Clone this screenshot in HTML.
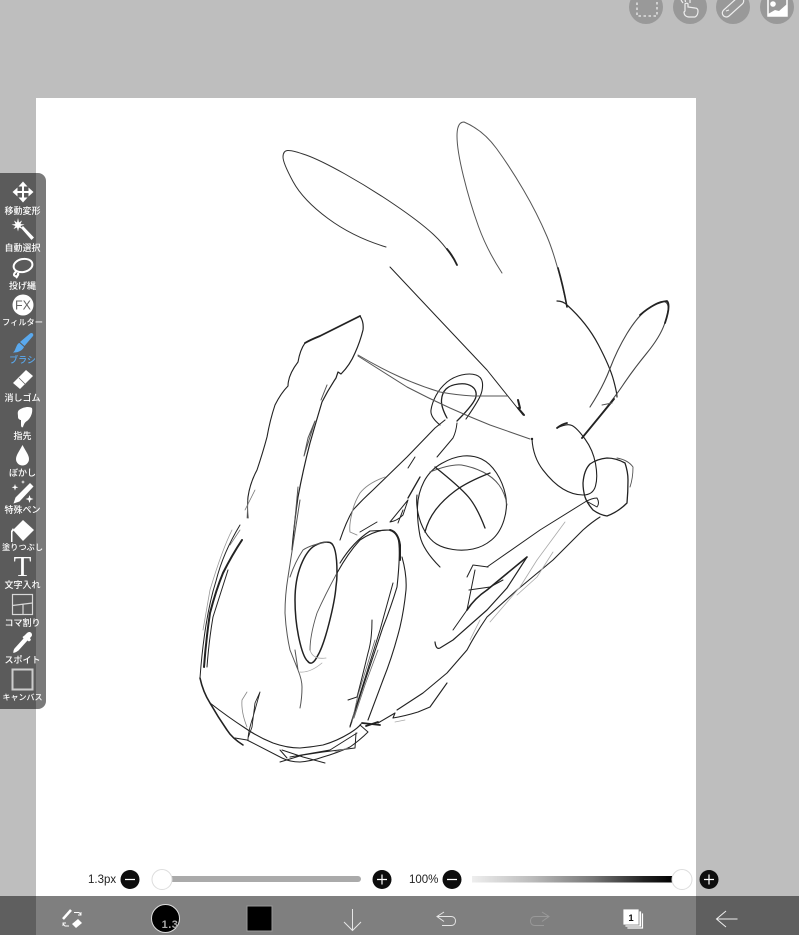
<!DOCTYPE html>
<html><head><meta charset="utf-8">
<style>
html,body{margin:0;padding:0;width:799px;height:935px;overflow:hidden;background:#bebebe}
#canvas{position:absolute;left:36px;top:98px;width:660px;height:837px;background:#fff}
svg{position:absolute;left:0;top:0}
.panel{position:absolute;left:0;top:173px;width:46px;height:536px;background:rgba(0,0,0,.52);border-radius:0 8px 8px 0}
.bar{position:absolute;left:0;top:896px;width:799px;height:39px;background:rgba(0,0,0,.5)}
.lb{position:absolute;left:-6px;width:57px;text-align:center;color:#fff;font:500 9px/10px "Liberation Sans","Noto Sans CJK JP",sans-serif;white-space:nowrap}
.t{position:absolute;font:11.5px/14px "Liberation Sans",sans-serif;color:#222}
</style></head><body>
<div id="canvas"></div>
<svg width="799" height="935" viewBox="0 0 799 935" fill="none" stroke="#222" stroke-linecap="round" stroke-linejoin="round">
<!-- ears -->
<path stroke="#333" stroke-width="1" d="M386 247Q353 237 328 218.500Q303 200 293 181.500Q283 163 283 157Q283 151 287.500 150.500Q292 150 306 155Q320 160 345 174Q370 188 395 205Q420 222 433.500 234.500Q447 247 457 265"/>
<path stroke-width="1.800" d="M447 249Q453 256 457 265"/>
<path stroke="#555" stroke-width="1" d="M502 273Q487 250 478.500 226.500Q470 203 463.500 176.500Q457 150 457 136Q457 122 464 122Q483 130 496.500 148.500Q510 167 523.500 190Q537 213 547 236.500Q557 260 567 307"/>
<path stroke-width="1.600" d="M558 268Q563 285 567 307"/>
<path stroke-width="1.200" d="M557 301Q563 301 567 305Q587 323 598.500 345Q610 367 613.500 380Q617 393 617 397"/>
<path stroke="#444" stroke-width="1.100" d="M590 407Q603 387 610 368.500Q617 350 627 333.500Q637 317 647 309.500Q657 302 662 301.500Q667 301 668 306Q669 311 664.500 324Q660 337 646.500 353.500Q633 370 623 385Q613 400 582 438"/>
<path stroke-width="1.800" d="M640 315Q655 302 667 301Q671 305 665 323M614 399L582 438"/>
<path stroke="#555" stroke-width="1" d="M602 405L612 403"/>
<path stroke-width="1" d="M390 267L437 317L487 370L523 415"/>
<path stroke-width="2" d="M518 408L524 415M518 400L520 408"/>
<!-- arm -->
<path stroke-width="1.100" d="M248 518Q247 505 248 497Q250 483 257 470Q263 452 267 437Q270 420 275 405Q281 393 288 386Q288 375 298 362Q300 350 305 343"/>
<path stroke-width="1.800" d="M305 343Q310 340 320 336L360 316"/>
<path stroke-width="1.200" d="M360 316Q364 322 363 330Q360 342 355 353Q350 365 341 374L338 372L336 378Q328 390 322 402Q316 422 310 443Q303 470 298 497Q294 525 292 550"/>
<path stroke="#555" stroke-width="1" d="M315 421L304 456L308 438L315 421M327 385L321 400M298 487L294 530"/>
<path stroke="#777" stroke-width=".8" d="M255 490L245 510M240 530L230 545"/>
<!-- left contour -->
<path stroke-width="1" d="M240 525Q223 553 216 581Q210 600 206 625Q202 650 200 678"/>
<path stroke-width="2" d="M242 540Q232 555 223 573Q216 590 210 613Q206 640 204 667"/>
<path stroke-width="1" d="M228 570Q220 595 213 617Q209 640 207 667"/>
<path stroke="#999" stroke-width=".8" d="M232 530Q222 550 210 590L203 630"/>
<path stroke-width="1.600" d="M200 678Q203 692 210 703Q218 717 227 730Q232 738 243 745"/>
<path stroke-width="1.100" d="M210 703Q228 717 245 728Q258 737 273 743Q287 748 300 748Q312 747 323 745Q337 741 350 733Q358 728 361 724"/>
<path stroke-width="1" d="M235 738L247 740L282 758Q290 762 300 762Q312 761 323 757Q337 753 350 747Q360 740 368 732L360 725"/>
<path stroke-width="1" d="M280 750L287 758M280 762L303 755L323 752L355 748L356 733M282 750L303 757L325 763M290 757L330 750L357 733"/>
<path stroke="#888" stroke-width=".8" d="M335 752L348 748"/>
<path stroke-width=".9" d="M248 740Q248 732 253 717L260 692L255 703L252 727L248 738"/>
<path stroke="#888" stroke-width=".8" d="M247 727Q241 712 242 700L247 692"/>
<!-- oval -->
<path stroke-width="1.500" d="M337 573Q337 545 330 542.500Q323 541 315 545.500Q307 550 301 565Q295 580 295 600Q295 620 299 638.500Q303 657 307.500 661Q312 667 317.500 656Q323 647 329 623.500Q335 600 336 586.500Q337 580 337 573"/>
<path stroke="#555" stroke-width="1" d="M300 500L288 577Q285 595 285 613Q286 632 290 650L298 670Q302 680 302 687Q302 698 300 708M327 542Q310 545 303 550Q295 562 290 577M295 650L298 670"/>
<path stroke="#aaa" stroke-width=".8" d="M310 650Q313 660 326 658M300 672Q310 673 322 663"/>
<path stroke="#555" stroke-width=".9" d="M310 650Q310 635 317 613Q325 595 337 573"/>
<path stroke="#777" stroke-width=".8" d="M248 500L247 518"/>
<!-- heart lobe -->
<path stroke-width="1.100" d="M337 573Q348 553 360 540Q375 530 387 530Q396 530 398 538Q401 550 397 587Q391 607 383 627Q373 657 363 687L350 727"/>
<path stroke-width="1.100" d="M340 563Q353 542 370 531L390 530M402 557Q407 575 406 590Q404 610 400 627Q393 655 383 680L368 720"/>
<path stroke-width="2" d="M390 530Q398 532 400 545L400 560"/>
<path stroke-width="1" d="M377 522L360 532M393 583L380 630L366 675L350 726M372 620Q372 640 368 653Q362 678 357 697L348 700"/>
<path stroke="#666" stroke-width=".8" d="M375 640L358 695L352 722M378 650L365 685L354 718"/>
<path stroke-width="1.800" d="M362 723L380 725M366 726L378 722"/>
<!-- wrist lower -->
<path stroke-width="1.100" d="M378 723L395 713L393 718Q405 716 418 712L430 707L447 683"/>
<path stroke-width="1.100" d="M397 710L423 693L447 673L467 650Q476 633 487 617L517 590L553 560Q570 543 583 530Q592 522 600 517"/>
<path stroke="#aaa" stroke-width=".8" d="M395 722L405 720M490 622L520 587L537 560L565 522M517 595L537 577L553 552M470 640L480 620"/>
<path stroke-width="1.200" d="M435 642Q436 650 440 648L453 640L487 610L507 588L527 557"/>
<path stroke-width="1.600" d="M467 610Q475 598 487 590Q505 575 527 557"/>
<path stroke-width="1" d="M469 590L490 587L503 580M475 570L467 610L453 630M473 565L467 577M473 565L488 567"/>
<path stroke-width="1" d="M487 567L540 530L585 502Q592 498 597 498Q600 503 597 507L588 502"/>
<!-- fingers -->
<path stroke-width="1.100" d="M532 439Q533 457 543 470Q553 483 563 489Q573 495 583 495Q593 495 595.500 486Q598 477 595.500 463.500Q593 450 585 439Q577 428 572 425.500Q567 423 557 428"/>
<path stroke-width="1.800" d="M557 428Q562 424 567 423"/>
<circle cx="532" cy="439" r="1.200" fill="#222" stroke="none"/>
<path stroke-width="1.300" d="M583 483Q584 470 590 464Q597 459 607 458Q616 458 625 463Q628 472 628 480Q628 492 627 503Q618 512 607 516Q600 515 593 510Q587 503 585 497Q583 490 583 483"/>
<path stroke="#555" stroke-width=".9" d="M617 458Q628 460 633 467Q633 478 630 487"/>
<!-- knuckle -->
<path stroke-width="1.100" d="M440 425Q430 417 431 410Q432 403 436 395.500Q440 388 446.500 382.500Q453 377 461.500 375Q470 373 476 375Q482 377 482.500 383.500Q483 390 480 396.500Q477 403 466 419"/>
<path stroke-width="1.300" d="M447 418Q441 407 441.500 400Q442 393 446 389Q450 385 458.500 384Q467 383 472 386.500Q477 390 476 396.500Q475 403 457 421"/>
<path stroke="#555" stroke-width="1" d="M358 355Q380 368 400 377Q420 386 440 392Q456 395 473 396L507 396"/>
<path stroke="#555" stroke-width="1" d="M358 356Q385 373 407 387Q428 398 450 408Q470 417 490 425L530 439"/>
<!-- forearm -->
<path stroke-width="1.100" d="M445 420L435 428L407 457L373 490Q362 500 353 510Q346 522 340 540"/>
<path stroke-width="1" d="M457 423Q456 432 453 438L437 457M415 457L408 468"/>
<path stroke="#888" stroke-width=".9" d="M385 477Q368 483 360 493Q354 503 352 513Q349 525 350 532L357 535"/>
<path stroke-width="1.300" d="M420 477L408 498"/>
<path stroke-width="1" d="M408 500L390 522Q397 521 403 515L408 500M403 510L398 523"/>
<!-- ball -->
<path stroke-width="1.100" d="M440 567Q423 550 420 536Q417 520 417.500 506.500Q418 493 424 481.500Q430 470 441.500 463.500Q453 457 463 456Q473 455 481.500 459Q490 463 496.500 473Q503 483 505.500 495Q508 507 504 520Q500 533 491.500 540Q483 547 473 549Q463 551 453 549.500Q443 548 436.500 544Q430 540 425 531.500Q420 523 418 513Q416 503 417 495"/>
<path stroke="#555" stroke-width="1" d="M430 472Q450 464 461.500 465Q473 467 483 472Q493 477 499 485Q505 493 507 505"/>
<path stroke-width="1.300" d="M435 467Q460 487 468.500 497Q477 507 485 528M490 473Q467 482 455 491Q443 500 435.500 510Q428 520 425 532"/>
</svg>

<div class="panel"></div>
<div class="lb" style="top:206px">移動変形</div>
<div class="lb" style="top:243px">自動選択</div>
<div class="lb" style="top:281px">投げ縄</div>
<div class="lb" style="top:318px;font-size:8.200px">フィルター</div>
<div class="lb" style="top:355px;color:#5aa9ee">ブラシ</div>
<div class="lb" style="top:393px">消しゴム</div>
<div class="lb" style="top:431px">指先</div>
<div class="lb" style="top:468px">ぼかし</div>
<div class="lb" style="top:505px">特殊ペン</div>
<div class="lb" style="top:543px;font-size:8.200px">塗りつぶし</div>
<div class="lb" style="top:580px">文字入れ</div>
<div class="lb" style="top:618px">コマ割り</div>
<div class="lb" style="top:655px">スポイト</div>
<div class="lb" style="top:693px;font-size:8px">キャンバス</div>

<svg width="46" height="709" viewBox="0 0 46 709" fill="#fff" stroke="none">
<!-- move -->
<path d="M22 186h2v5h5v2h-5v5h-2v-5h-5v-2h5z"/>
<path d="M23 181.500l4.500 5h-9zM23 202.500l4.500-5h-9zM12.500 192l5-4.500v9zM33.500 192l-5-4.500v9z"/>
<!-- wand -->
<path d="M21 228l2-2 11 11.500-2.500 2.500z"/>
<path d="M18 218l1 4.500 3-2-1.500 3.500 4 .500-4 1.500 2 3-3.500-1.500-1 4-1-4-3.500 1.500 2-3-4-1.500 4-.500-1.500-3.500 3 2z"/>
<!-- lasso -->
<g fill="none" stroke="#fff" stroke-width="2"><ellipse cx="23" cy="265.500" rx="9.500" ry="6.500" transform="rotate(-12 23 265.500)"/><path d="M17 271c-3 2-4 4-2 5 2 1 4-1 3-3 0 3-1 4-2 5"/></g>
<!-- FX -->
<circle cx="23" cy="305" r="10.500"/>
<text x="23" y="309.500" text-anchor="middle" font-family="Liberation Sans" font-size="12.500" fill="#666">FX</text>
<!-- brush -->
<path d="M30 333.500c2-1.500 4 .500 3 2.500l-8.500 10-4.500-4z" fill="#5aa9ee"/><path d="M19.500 343l4.500 4c-1 3-6 6-11 5.500 2-1.500 2-3 3-5 1-2.500 2-4.500 3.500-4.500z" fill="#5aa9ee"/>
<!-- eraser -->
<path d="M26 370l7 6-13 13-7-6z"/><path d="M19 378l6 6" stroke="#666" stroke-width=".8" fill="none"/>
<!-- finger -->
<path d="M19 410c4-3 10-4 13-2 1 4-1 10-5 13-2 1-3 3-4 6-1 1-2 0-2-2 0-2 0-4 0-5-1 0-3-1-3-3 0-3-1-5 1-7z"/>
<!-- drop -->
<path d="M22.500 445c3 6 6.500 10 6.500 14a6.500 6.500 0 0 1-13 0c0-4 3.500-8 6.500-14z"/>
<!-- special pen -->
<path d="M30 483l3.500 3.500-14 15-6 2 2-6z"/>
<path d="M15 484l.8 2.500 2.500.8-2.500.8-.8 2.500-.8-2.500-2.500-.8 2.500-.8zM23 480l.5 1.500 1.500.500-1.500.500-.500 1.500-.500-1.500-1.500-.500 1.500-.500zM29.500 495l1 3 3 1-3 1-1 3-1-3-3-1 3-1z"/>
<!-- fill -->
<path d="M23 520l11 10-11 11-10-11z"/><path d="M13 528l-2 3v11h1.500v-10l1.500-2z"/>
<!-- T -->
<text x="22.500" y="576" text-anchor="middle" font-family="Liberation Serif" font-size="29">T</text>
<!-- koma -->
<g fill="none" stroke="#d8d8d8" stroke-width="1.200"><rect x="12.500" y="594.500" width="20" height="20"/><path d="M12.500 605.500l20-2.500M23 604.500v10"/></g>
<!-- dropper -->
<path d="M27 633c2-2 5-1 5 2 0 1-1 2-2 3l1 2-2 1.500-1.500-1-9 10c-1.500 1-3 2-5 2.500-.5-.5 0-3 1-4.500l9-10-1-1.500 2-1.500z"/>
<!-- canvas -->
<rect x="12.500" y="669.500" width="20" height="20" fill="none" stroke="#ccc" stroke-width="2"/>
</svg>

<!-- top buttons -->
<svg width="799" height="30" viewBox="0 0 799 30" fill="none">
<circle cx="646" cy="7" r="17" fill="#999"/><circle cx="690" cy="7" r="17" fill="#999"/><circle cx="733" cy="7" r="17" fill="#999"/><circle cx="777" cy="7" r="17" fill="#999"/>
<rect x="637" y="-3" width="20" height="19" stroke="#eee" stroke-width="1.300" stroke-dasharray="2.500 2.500"/>
<path d="M681 0l2 3M685 -1l.5 3M690 0v3M685 4v7l-1 1c0 3 2 5 5 5h6c2-1 3-3 3-6 0-2-1-3-3-3l-7-1V4c0-1-3-1-3 0z" stroke="#eee" stroke-width="1.200"/>
<rect x="720" y="3" width="26" height="8" rx="4" transform="rotate(-42 733 7)" stroke="#eee" stroke-width="1.200"/>
<path d="M726 11l3-1" stroke="#eee"/>
<path d="M768 -2v18h19v-18" stroke="#fff" stroke-width="1.500"/>
<circle cx="773" cy="4" r="2.800" fill="#fff"/>
<path d="M768 16v-2l7-4 4 1 8-7v12z" fill="#fff"/>
</svg>

<!-- sliders -->
<div class="t" style="left:88px;top:873px">1.3px</div>
<div class="t" style="left:409px;top:873px">100%</div>
<svg width="799" height="935" viewBox="0 0 799 935">
<defs>
<linearGradient id="g"><stop offset="0" stop-color="#eee"/><stop offset=".3" stop-color="#bbb"/><stop offset=".6" stop-color="#777"/><stop offset=".85" stop-color="#222"/><stop offset="1" stop-color="#000"/></linearGradient>
</defs>
<rect x="152" y="876" width="209" height="6" rx="3" fill="#aaa"/>
<circle cx="162" cy="879.500" r="10" fill="#fff" stroke="#ddd"/>
<rect x="472" y="876" width="202" height="6.500" fill="url(#g)"/>
<circle cx="682" cy="879.500" r="10" fill="#fff" stroke="#ddd"/>
<g fill="#0d0d0d"><circle cx="130" cy="879.500" r="9.500"/><circle cx="382" cy="879.500" r="9.500"/><circle cx="452" cy="879.500" r="9.500"/><circle cx="709" cy="879.500" r="9.500"/></g>
<g stroke="#fff" stroke-width="1.200"><path d="M125 879.500h10M447 879.500h10M377 879.500h10M382 874.500v10M704 879.500h10M709 874.500v10"/></g>
</svg>

<div class="bar"></div>
<svg width="799" height="935" viewBox="0 0 799 935" fill="none" stroke="#fff" stroke-width="1">
<!-- swap -->
<path d="M63 919l8-9" stroke-width="2.500"/>
<path d="M72 924l6-5 4 4-6 5z" fill="#fff" stroke="none"/>
<path d="M74 912.500h5l2 2M81 912v3h-3M69 926h-4l-2-2.500M63 926v-3h3" stroke-width=".9"/>
<!-- brush -->
<circle cx="165.500" cy="918.500" r="14" fill="#000" stroke="#ddd" stroke-width="1"/>
<text x="170" y="928" text-anchor="middle" fill="#aaa" stroke="none" font-family="Liberation Sans" font-weight="bold" font-size="11" letter-spacing=".5">1.3</text>
<!-- colour -->
<rect x="247" y="906" width="25" height="25" fill="#000" stroke="#999"/>
<!-- down -->
<path d="M352.500 909v21M344 922l8.500 8.500 8.500-8.500" stroke="#e6e6e6"/>
<!-- undo -->
<path d="M444 912l-7 4.500 7 5M437 916.500h14c3 0 4.500 2 4.500 4.500s-1.500 4.500-4.500 4.500h-9" stroke="#e6e6e6"/>
<!-- redo -->
<path d="M542 912l7 4.500-7 5M549 916.500h-14c-3 0-4.500 2-4.500 4.500s1.500 4.500 4.500 4.500h9" stroke="#999"/>
<!-- layers -->
<rect x="627" y="913" width="16.500" height="16" fill="#fff" stroke="#7f7f7f" stroke-width=".8"/>
<rect x="625" y="911" width="16.500" height="16" fill="#fff" stroke="#7f7f7f" stroke-width=".8"/>
<rect x="623" y="909" width="16" height="16" fill="#fff" stroke="#7f7f7f" stroke-width=".8"/>
<text x="631" y="921" text-anchor="middle" fill="#111" stroke="none" font-family="Liberation Sans" font-weight="bold" font-size="9.500">1</text>
<!-- back -->
<path d="M717 919h20.500M726 911l-9.500 8 9.500 8" stroke="#eee"/>
</svg>
</body></html>
